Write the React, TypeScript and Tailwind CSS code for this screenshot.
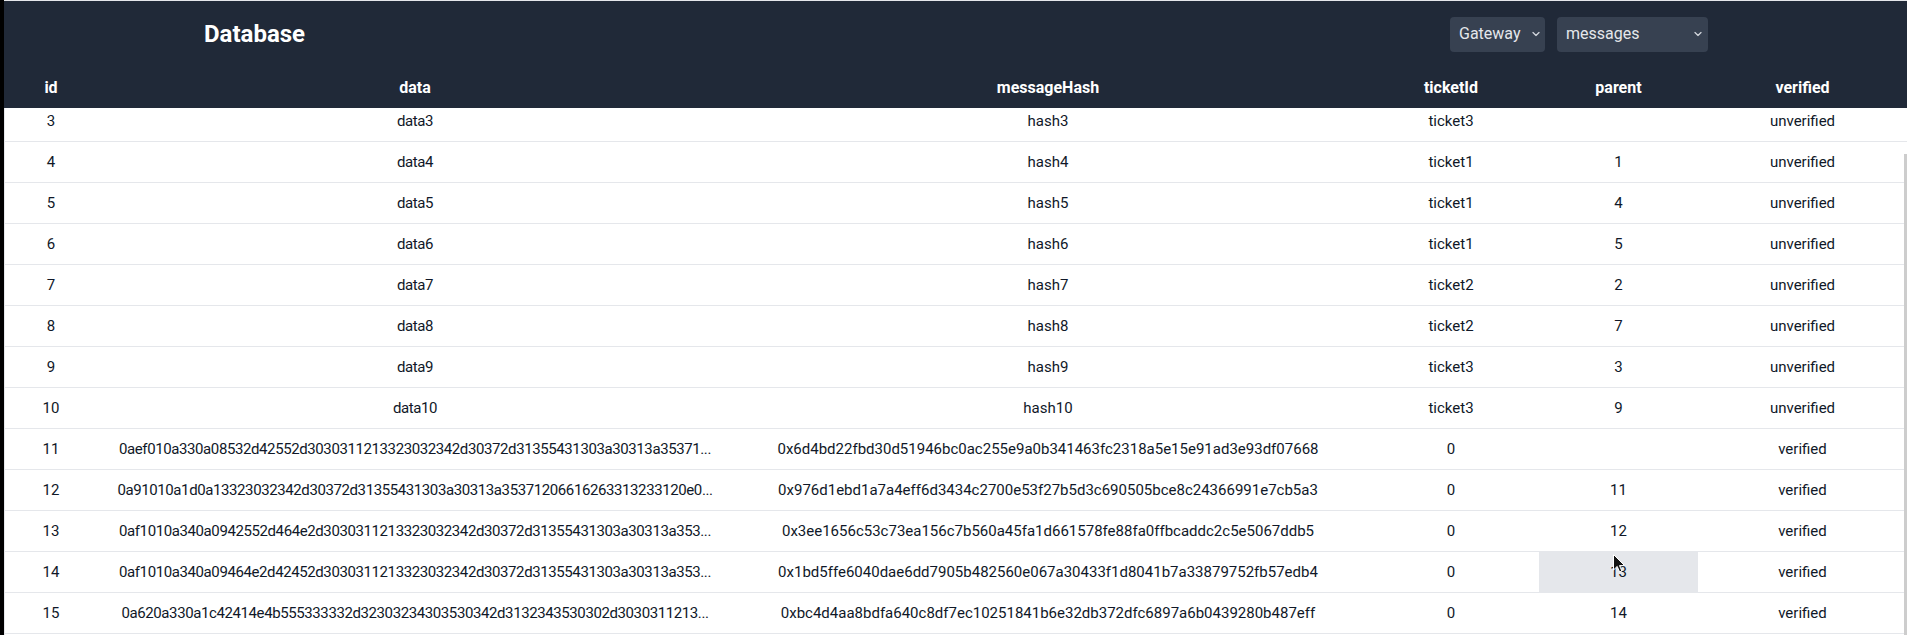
import React from "react";

type Row = {
  id: number;
  data: string;
  messageHash: string;
  ticketId: string;
  parent: string;
  verified: string;
};

const rows: Row[] = [
  { id: 3, data: "data3", messageHash: "hash3", ticketId: "ticket3", parent: "", verified: "unverified" },
  { id: 4, data: "data4", messageHash: "hash4", ticketId: "ticket1", parent: "1", verified: "unverified" },
  { id: 5, data: "data5", messageHash: "hash5", ticketId: "ticket1", parent: "4", verified: "unverified" },
  { id: 6, data: "data6", messageHash: "hash6", ticketId: "ticket1", parent: "5", verified: "unverified" },
  { id: 7, data: "data7", messageHash: "hash7", ticketId: "ticket2", parent: "2", verified: "unverified" },
  { id: 8, data: "data8", messageHash: "hash8", ticketId: "ticket2", parent: "7", verified: "unverified" },
  { id: 9, data: "data9", messageHash: "hash9", ticketId: "ticket3", parent: "3", verified: "unverified" },
  { id: 10, data: "data10", messageHash: "hash10", ticketId: "ticket3", parent: "9", verified: "unverified" },
  {
    id: 11,
    data: "0aef010a330a08532d42552d3030311213323032342d30372d31355431303a30313a35371...",
    messageHash: "0x6d4bd22fbd30d51946bc0ac255e9a0b341463fc2318a5e15e91ad3e93df07668",
    ticketId: "0",
    parent: "",
    verified: "verified",
  },
  {
    id: 12,
    data: "0a91010a1d0a13323032342d30372d31355431303a30313a35371206616263313233120e0...",
    messageHash: "0x976d1ebd1a7a4eff6d3434c2700e53f27b5d3c690505bce8c24366991e7cb5a3",
    ticketId: "0",
    parent: "11",
    verified: "verified",
  },
  {
    id: 13,
    data: "0af1010a340a0942552d464e2d3030311213323032342d30372d31355431303a30313a353...",
    messageHash: "0x3ee1656c53c73ea156c7b560a45fa1d661578fe88fa0ffbcaddc2c5e5067ddb5",
    ticketId: "0",
    parent: "12",
    verified: "verified",
  },
  {
    id: 14,
    data: "0af1010a340a09464e2d42452d3030311213323032342d30372d31355431303a30313a353...",
    messageHash: "0x1bd5ffe6040dae6dd7905b482560e067a30433f1d8041b7a33879752fb57edb4",
    ticketId: "0",
    parent: "13",
    verified: "verified",
  },
  {
    id: 15,
    data: "0a620a330a1c42414e4b555333332d32303234303530342d3132343530302d3030311213...",
    messageHash: "0xbc4d4aa8bdfa640c8df7ec10251841b6e32db372dfc6897a6b0439280b487eff",
    ticketId: "0",
    parent: "14",
    verified: "verified",
  },
];

const columns = ["id", "data", "messageHash", "ticketId", "parent", "verified"];

const gridCols = "grid grid-cols-[92px_636px_630px_176px_159px_1fr]";

const Chevron = () => (
  <svg width="8" height="5" viewBox="0 0 8 5" fill="none">
    <path d="M1 1l3 3 3-3" stroke="#d1d5db" strokeWidth="1.3" strokeLinecap="round" strokeLinejoin="round" />
  </svg>
);

const Select = ({ value, width, chevronRight }: { value: string; width: string; chevronRight: string }) => (
  <div className={`relative h-[35px] ${width}`}>
    <select
      defaultValue={value}
      className="h-full w-full appearance-none rounded bg-[#374151] pl-[9px] pr-6 text-base text-gray-200 outline-none"
    >
      <option>{value}</option>
    </select>
    <span className={`pointer-events-none absolute top-1/2 -translate-y-1/2 ${chevronRight}`}>
      <Chevron />
    </span>
  </div>
);

export default function App() {
  return (
    <div className="relative flex h-[635px] w-full overflow-hidden bg-black font-[Roboto,'Liberation_Sans',sans-serif]">
      <div className="w-1 shrink-0 bg-black" />
      <div className="flex min-w-0 flex-1 flex-col border-t border-gray-200 bg-white">
        {/* top bar */}
        <div className="flex h-[66px] shrink-0 items-center justify-between bg-[#202938] pl-[200px] pr-[199px]">
          <h1 className="text-2xl font-bold text-white">Database</h1>
          <div className="flex items-center gap-3">
            <Select value="Gateway" width="w-[95px]" chevronRight="right-[5px]" />
            <Select value="messages" width="w-[151px]" chevronRight="right-[6px]" />
          </div>
        </div>

        {/* table header */}
        <div className={`${gridCols} h-[41px] shrink-0 border-l border-[#202938] bg-[#202938] text-base font-bold text-white`}>
          {columns.map((c) => (
            <div key={c} className="flex items-center justify-center">
              {c}
            </div>
          ))}
        </div>

        {/* table body */}
        <div className="relative min-h-0 flex-1 overflow-hidden border-l border-gray-200">
          <div className="-mt-[7px]">
            {rows.map((r) => (
              <div key={r.id} className={`${gridCols} h-[41px] border-b border-gray-200 text-[15px] text-gray-900`}>
                <div className="flex items-center justify-center">{r.id}</div>
                <div className="truncate px-3 text-center leading-10 tracking-[-0.4px]">{r.data}</div>
                <div className="truncate px-2 text-center leading-10">{r.messageHash}</div>
                <div className="flex items-center justify-center">{r.ticketId}</div>
                <div className={`flex items-center justify-center ${r.id === 14 ? "bg-gray-200" : ""}`}>
                  {r.parent}
                </div>
                <div className="flex items-center justify-center">{r.verified}</div>
              </div>
            ))}
          </div>
          {/* scrollbar thumb */}
          <div className="absolute right-0 top-[46px] bottom-0 w-[3px] bg-[#cdcdcd]" />
        </div>
      </div>

      {/* mouse cursor */}
      <svg className="pointer-events-none absolute left-[1613px] top-[554px]" width="12" height="19" viewBox="0 0 12 19">
        <path d="M0.5 0.5v15.5l3.7-3.6 2.4 5.6 2.2-1-2.3-5.4h5.1z" fill="#111" stroke="#fff" strokeWidth="1" />
      </svg>
    </div>
  );
}
